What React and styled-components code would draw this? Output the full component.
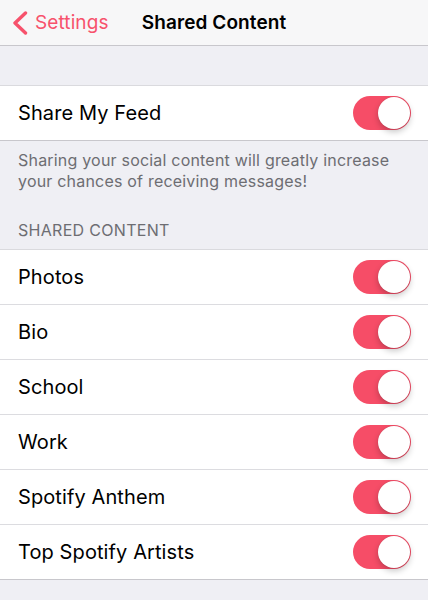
import React, { useState } from "react";
import styled, { createGlobalStyle } from "styled-components";

const Global = createGlobalStyle`
  html, body { margin: 0; padding: 0; background: #efeff4; }
  body { font-family: Inter, "Noto Sans", sans-serif; -webkit-font-smoothing: antialiased; }
  * { box-sizing: border-box; }
`;

const Page = styled.div`
  width: 428px;
  min-height: 600px;
  background: #efeff4;
  display: flex;
  flex-direction: column;
`;

const NavBar = styled.header`
  height: 46px;
  background: #f7f7f8;
  border-bottom: 1px solid #c8c7cc;
  display: grid;
  grid-template-columns: 1fr auto 1fr;
  align-items: center;
  padding: 0 10px;
`;

const BackButton = styled.button`
  justify-self: start;
  display: flex;
  align-items: center;
  gap: 7px;
  background: none;
  border: 0;
  padding: 0 0 0 2px;
  color: #f7526c;
  font-family: inherit;
  font-size: 19px;
  letter-spacing: 0.1px;
  cursor: pointer;
`;

const Title = styled.h1`
  margin: 0;
  font-size: 19px;
  font-weight: 600;
  color: #000;
  letter-spacing: 0.1px;
`;

const Spacer = styled.div`
  height: ${(p) => p.$h}px;
`;

const Group = styled.section`
  background: #fff;
  border-top: 1px solid #dadade;
  border-bottom: 1px solid #c8c7cc;
`;

const Row = styled.div`
  height: 54px;
  display: flex;
  align-items: center;
  justify-content: space-between;
  padding: 0 17px 0 18px;
  & + & {
    border-top: 1px solid #dcdce0;
    height: 55px;
  }
`;

const RowLabel = styled.span`
  font-size: 20px;
  color: #000;
  letter-spacing: 0.1px;
`;

const Footer = styled.p`
  margin: 0;
  padding: 9px 18px 0;
  font-size: 16px;
  line-height: 21px;
  color: #6d6d72;
  letter-spacing: 0.2px;
`;

const SectionHeader = styled.h2`
  margin: 0;
  padding: 29px 18px 9px;
  font-size: 16px;
  font-weight: 400;
  line-height: 19px;
  color: #6d6d72;
  text-transform: uppercase;
  letter-spacing: 0.3px;
`;

const Track = styled.button`
  width: 58px;
  height: 34px;
  border-radius: 17px;
  border: 0;
  padding: 0;
  background: ${(p) => (p.$on ? "#f64d67" : "#e5e5ea")};
  position: relative;
  cursor: pointer;
  flex-shrink: 0;
`;

const Knob = styled.span`
  position: absolute;
  top: 1px;
  left: ${(p) => (p.$on ? "25px" : "1px")};
  width: 32px;
  height: 32px;
  border-radius: 50%;
  background: #fff;
  box-shadow: 0 3px 6px rgba(0, 0, 0, 0.22), 0 0 1px rgba(0, 0, 0, 0.2);
  transition: left 0.2s;
`;

function Toggle({ initial = true }) {
  const [on, setOn] = useState(initial);
  return (
    <Track $on={on} onClick={() => setOn(!on)} aria-pressed={on}>
      <Knob $on={on} />
    </Track>
  );
}

const Chevron = () => (
  <svg width="16" height="24" viewBox="0 0 16 24" fill="none">
    <path d="M13.5 2 L3 12 L13.5 22" stroke="#f7526c" strokeWidth="3.4" strokeLinecap="round" strokeLinejoin="round" />
  </svg>
);

const items = ["Photos", "Bio", "School", "Work", "Spotify Anthem", "Top Spotify Artists"];

export default function App() {
  return (
    <>
      <Global />
      <Page>
        <NavBar>
          <BackButton>
            <Chevron />
            Settings
          </BackButton>
          <Title>Shared Content</Title>
          <span />
        </NavBar>
        <Spacer $h={39} />
        <Group>
          <Row>
            <RowLabel>Share My Feed</RowLabel>
            <Toggle />
          </Row>
        </Group>
        <Footer>
          Sharing your social content will greatly increase your chances of receiving messages!
        </Footer>
        <SectionHeader>Shared Content</SectionHeader>
        <Group>
          {items.map((t) => (
            <Row key={t}>
              <RowLabel>{t}</RowLabel>
              <Toggle />
            </Row>
          ))}
        </Group>
      </Page>
    </>
  );
}
